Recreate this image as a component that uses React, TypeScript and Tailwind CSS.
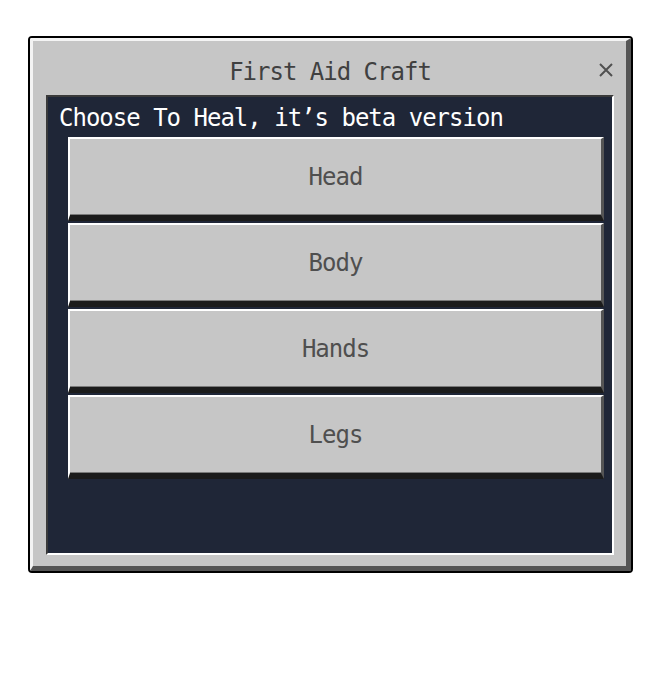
import React from "react";

const parts = ["Head", "Body", "Hands", "Legs"];

const pixelFont = {
  fontFamily: '"DejaVu Sans Mono", "Liberation Mono", monospace',
};

function PartButton({ label }: { label: string }) {
  return (
    <div className="h-[84px] bg-[#c6c6c6] border-t-2 border-l-2 border-t-white border-l-white border-r-[3px] border-r-[#555555] border-b-[6px] border-b-[#1b1b1b] shadow-[inset_0_-1px_0_#7a7a7a] flex items-center justify-center">
      <span className="text-[24px] tracking-[-1px] text-[#4f4f4f] leading-none">{label}</span>
    </div>
  );
}

export default function App() {
  return (
    <div className="w-[670px] h-[700px] bg-white pt-[36px] pl-[28px]" style={pixelFont}>
      <div className="w-[605px] h-[537px] border-2 border-black rounded-[4px] bg-[#c6c6c6] overflow-hidden">
        <div className="h-full border-t-[3px] border-l-[3px] border-t-[#f4f4f4] border-l-[#f4f4f4] border-r-[5px] border-b-[5px] border-r-[#555555] border-b-[#555555] flex flex-col pl-[13px] pr-[12px] pb-[11px]">
          <div className="h-[54px] flex items-center justify-center relative">
            <span className="text-[24px] tracking-[-1px] text-[#404040] leading-none pt-[8px]">First Aid Craft</span>
            <svg
              className="absolute right-[0px] top-[21px]"
              width="16"
              height="16"
              viewBox="0 0 16 16"
            >
              <path d="M2 2 L14 14 M14 2 L2 14" stroke="#505050" strokeWidth="2" />
            </svg>
          </div>
          <div className="flex-1 bg-[#1f2637] border-t-2 border-l-2 border-t-[#3a3a3a] border-l-[#3a3a3a] border-r-2 border-b-2 border-r-white border-b-white flex flex-col">
            <div className="h-[40px] flex items-center pl-[11px]">
              <span className="text-[24px] tracking-[-1px] text-white leading-none pt-[2px]">
                Choose To Heal, it’s beta version
              </span>
            </div>
            <div className="flex flex-col gap-[2px] pl-[20px] pr-[8px]">
              {parts.map((p) => (
                <PartButton key={p} label={p} />
              ))}
            </div>
          </div>
        </div>
      </div>
    </div>
  );
}
